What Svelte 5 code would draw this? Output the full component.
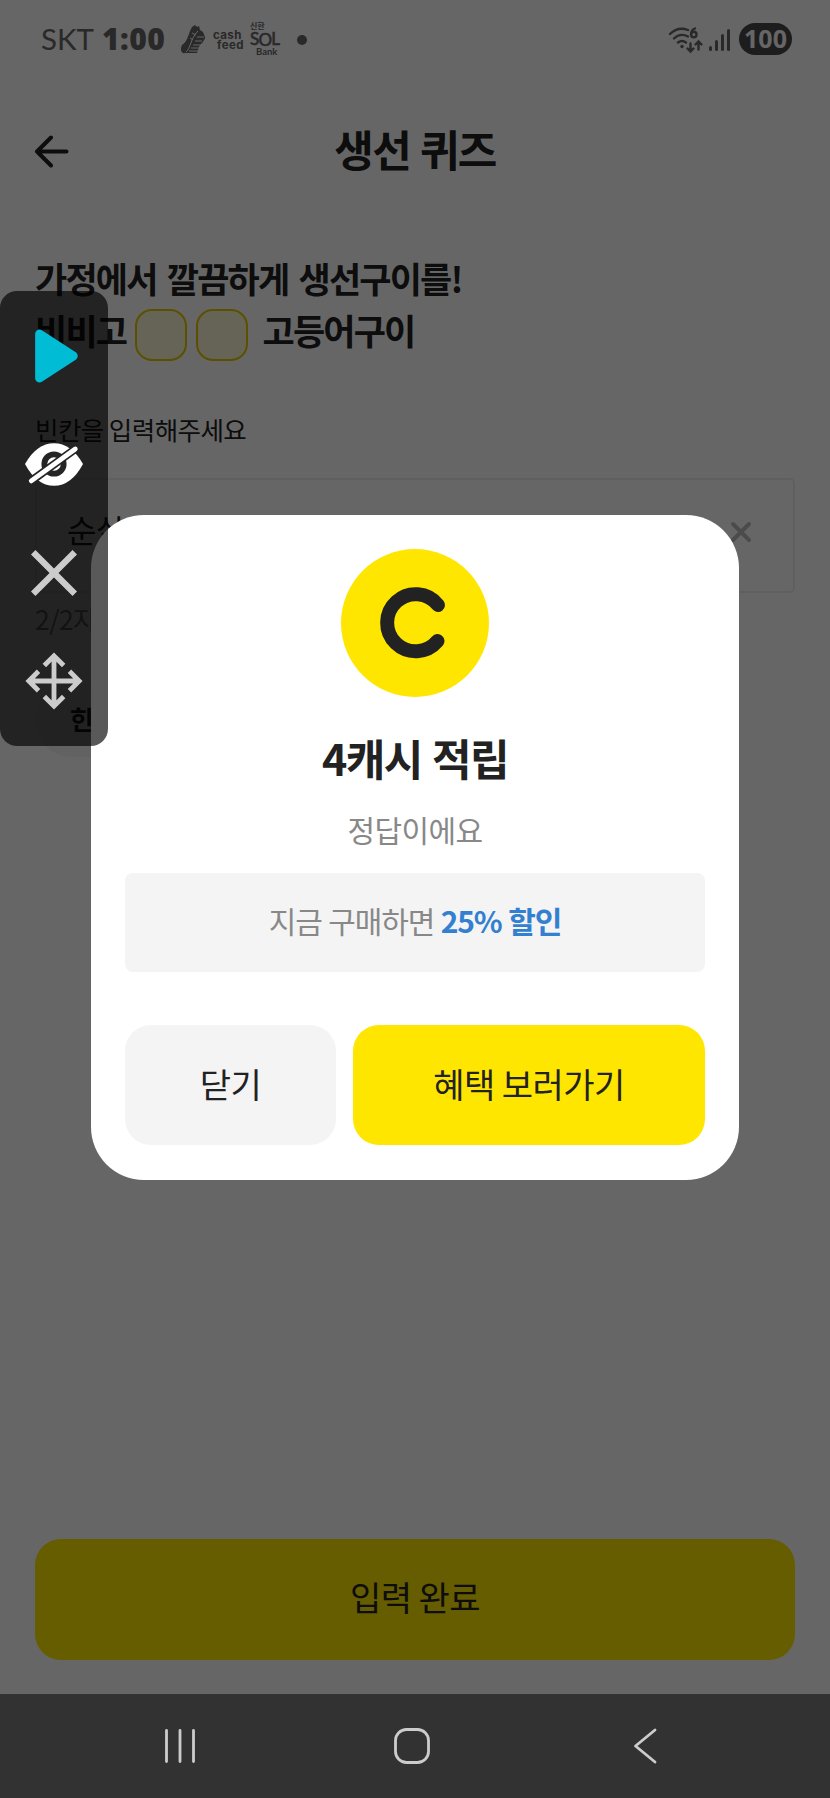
<script>
  let answer = $state('순살');
  const blanks = [1, 2];
  const signal = [5, 11, 17, 22];
</script>

<div class="phone">
  <header class="status">
    <span class="carrier">SKT</span>
    <span class="clock">1:00</span>
    <svg class="shoe" width="26" height="32" viewBox="0 0 26 32">
      <path d="M2 21C7 18 8 12 10 7L12 3l3-2 2 2 2-1 1 4 3 2 2 5c0 4-4 6-6 10l-2 6H5c-4 1-5-4-3-8z" fill="currentColor" />
      <path d="M6 28c5-4 4-13 12-21M13 21l8 0M11 24l9 0M9 27l10 0M15 17l7 0M17 13l7 0M12 9l4 2M10 14l3 2" fill="none" stroke="#fff" stroke-width="1" />
    </svg>
    <span class="cashfeed"><span>cash</span><span class="feed">feed</span></span>
    <span class="sol"><small>신한</small><b>S<em>O</em>L</b><strong>Bank</strong></span>
    <span class="more"></span>
    <span class="grow"></span>
    <svg class="wifi" width="36" height="28" viewBox="0 0 36 28" fill="none" stroke="currentColor" stroke-width="2.400" stroke-linecap="round">
      <path d="M2 8Q10 0 20 4M6 12.500q6-6 14-2M10 16.500q4-3 8 0" />
      <circle cx="14" cy="20.500" r="1.700" fill="currentColor" stroke="none" />
      <path d="M27 2.500Q23 4 23 8.500" />
      <circle cx="25.800" cy="8.500" r="2.700" />
      <path d="M22.500 17.500v8M19.500 22.500l3 3 3-3M30.500 23.500v-8M27.500 18.500l3-3 3 3" />
    </svg>
    <span class="bars">
      {#each signal as h}<i style="height: {h}px"></i>{/each}
    </span>
    <span class="battery">100</span>
  </header>

  <div class="titlebar">
    <svg width="36" height="34" viewBox="0 0 36 34" fill="none" stroke="#222" stroke-width="4" stroke-linecap="round" stroke-linejoin="round">
      <path d="M32.500 17.500H3M17 3.500L3 17.500l14 14" />
    </svg>
    <h1>생선 퀴즈</h1>
  </div>

  <main>
    <div class="question">
      <p>가정에서 깔끔하게 생선구이를!</p>
      <p class="line">
        <span class="head">비비고</span>
        {#each blanks as b (b)}<i class="blank"></i>{/each}
        <span class="tail">고등어구이</span>
      </p>
    </div>
    <p class="label">빈칸을 입력해주세요</p>
    <div class="field">
      <span>{answer}</span>
      <svg width="22" height="22" viewBox="0 0 22 22" stroke="#bbb" stroke-width="4" stroke-linecap="round"><path d="M3 3l16 16M19 3L3 19" /></svg>
    </div>
    <p class="count">{answer.length}/2자</p>
    <button class="hint">힌트</button>
    <button class="submit">입력 완료</button>
  </main>

  <nav>
    <svg width="34" height="38" viewBox="0 0 34 38"><path d="M3.500 3.500v31M17 3.500v31M30.500 3.500v31" /></svg>
    <svg class="home" width="38" height="38" viewBox="0 0 38 38"><rect x="2.500" y="2.500" width="33" height="33" rx="11" /></svg>
    <svg width="26" height="38" viewBox="0 0 26 38"><path d="M23 3L3.500 19 23 35" /></svg>
  </nav>

  <div class="scrim">
    <section class="modal">
      <svg class="coin" width="148" height="148" viewBox="0 0 148 148">
        <circle cx="74" cy="74" r="74" fill="#ffe600" />
        <path d="M97 56A28.500 28.500 0 1 0 96.500 92" fill="none" stroke="#222" stroke-width="14" stroke-linecap="round" />
      </svg>
      <h2>4캐시 적립</h2>
      <p class="result">정답이에요</p>
      <p class="offer">지금 구매하면&nbsp;<b>25% 할인</b></p>
      <div class="actions">
        <button class="close">닫기</button>
        <button class="go">혜택 보러가기</button>
      </div>
    </section>
  </div>

  <!-- floating auto-clicker controls -->
  <aside>
    <svg viewBox="0 0 60 60"><path d="M15 7v46L50 30z" fill="#00bcd4" stroke="#00bcd4" stroke-width="9" stroke-linejoin="round" /></svg>
    <svg viewBox="0 0 60 60">
      <path d="M0 30Q12 8.500 30 8.500Q48 8.500 60 30Q48 52.500 30 52.500Q12 52.500 0 30z" fill="#fff" />
      <circle cx="30" cy="30" r="10" fill="none" stroke="#252525" stroke-width="6" />
      <path d="M6.500 47.500L52 14.500" stroke="#252525" stroke-width="8.500" />
      <path d="M6.500 47.500L52 14.500" stroke="#fff" stroke-width="5" stroke-linecap="round" />
    </svg>
    <svg viewBox="0 0 60 60"><path d="M8.500 8.500l43 43M51.500 8.500l-43 43" stroke="#ccc" stroke-width="6.500" /></svg>
    <svg viewBox="0 0 60 60" fill="none" stroke="#ccc" stroke-width="5">
      <path d="M30 5v50M5 30h50M20 14L30 4l10 10M20 46l10 10 10-10M14 20L4 30l10 10M46 20l10 10-10 10" />
    </svg>
  </aside>
</div>

<style>
  :global(body) { margin: 0; }
  * { box-sizing: border-box; }
  .phone { position: relative; width: 830px; height: 1798px; display: flex; flex-direction: column; overflow: hidden; background: #fff; color: #222; font-family: "Noto Sans CJK KR", sans-serif; letter-spacing: -0.035em; }
  h1, h2, p { margin: 0; }
  button { border: 0; padding: 0; color: inherit; font: inherit; letter-spacing: inherit; }
  svg { display: block; flex: none; }

  .status { height: 79px; padding: 0 38px 0 41px; display: flex; align-items: center; color: #666; font-family: "Open Sans", sans-serif; letter-spacing: 0; }
  .carrier { width: 61px; margin-top: -2px; font: 29.5px Lato, sans-serif; }
  .clock { width: 78px; margin-top: -2px; font-weight: 800; font-size: 30px; letter-spacing: 0.5px; }
  .cashfeed { display: flex; flex-direction: column; margin-left: 7px; width: 37px; font: 700 11.5px/10px Inter, sans-serif; letter-spacing: 0.4px; }
  .feed { margin-left: 4px; }
  .sol { display: flex; flex-direction: column; width: 32px; line-height: 1; }
  .sol small { font: 700 8px/8px "Noto Sans CJK KR", sans-serif; }
  .sol b { font: 17px/17px Lato, sans-serif; letter-spacing: -0.8px; -webkit-text-stroke: 0.6px; }
  .sol em { position: relative; top: 1px; font-style: normal; }
  .sol strong { font: 700 9.5px/10px Lato, sans-serif; margin-left: 6px; }
  .more { width: 10px; height: 10px; margin-left: 15px; border-radius: 50%; background: currentColor; }
  .grow { flex: 1; }
  .bars { display: flex; align-items: flex-end; gap: 3px; margin: 0 9px 0 5px; }
  .bars i { width: 3px; border-radius: 2px; background: currentColor; }
  .battery { width: 53px; height: 32px; margin-top: -1px; border-radius: 16px; background: #4a4a4a; color: #fff; font-size: 25px; font-weight: 700; line-height: 30px; text-align: center; }

  .titlebar { height: 144px; padding: 0 34px; display: flex; align-items: center; }
  .titlebar h1 { flex: 1; margin: -7px 36px 0 0; text-align: center; font-size: 43px; line-height: 64px; letter-spacing: -0.04em; word-spacing: 2px; }

  main { flex: 1; padding: 29px 35px 34px; display: flex; flex-direction: column; align-items: flex-start; }
  .question { font-size: 35px; font-weight: 700; line-height: 52px; letter-spacing: -1.8px; word-spacing: 4px; }
  .line { display: flex; height: 52px; }
  .blank { width: 52px; height: 52px; margin: 5px 9px 0 0; border: 2px solid #e6c800; border-radius: 17px; background: #fffbd8; }
  .head { width: 99.5px; }
  .tail { margin-left: 6px; }
  .label { margin-top: 53px; font-size: 25.5px; line-height: 40px; }
  .field { width: 100%; height: 115px; margin-top: 29px; padding: 0 41px 8px 30px; display: flex; align-items: center; justify-content: space-between; border: 2px solid #eee; border-radius: 5px; font-size: 32px; }
  .field span { margin-top: -6px; }
  .count { margin-top: 6px; font-size: 26.5px; line-height: 40px; color: #888; }
  .hint { width: 116px; height: 74px; margin-top: 44px; padding-bottom: 4px; border-radius: 37px; background: #f4f4f4; font-size: 26px; font-weight: 700; }
  .submit { width: 100%; height: 121px; margin-top: auto; padding-bottom: 6px; border-radius: 26px; background: #ffe600; font-size: 34px; }

  /* system navigation sits above the page, not under the dialog */
  nav { position: relative; z-index: 1; height: 104px; padding: 0 172px 0 163px; display: flex; align-items: center; justify-content: space-between; background: #323232; }
  nav svg { fill: none; stroke: #ccc; stroke-width: 2.8; stroke-linecap: round; stroke-linejoin: round; }
  nav .home { margin-right: 6px; }

  .scrim { position: absolute; inset: 0; display: flex; justify-content: center; align-items: flex-start; padding-top: 515px; background: rgba(0, 0, 0, .6); }
  .modal { width: 648px; height: 665px; padding: 34px 34px 35px; display: flex; flex-direction: column; align-items: center; border-radius: 53px; background: #fff; }
  h2 { margin-top: 28px; font-size: 43px; line-height: 64px; letter-spacing: -0.037em; word-spacing: 2px; }
  .result { margin-top: 18px; font-size: 30px; line-height: 44px; color: #888; }
  .offer { width: 100%; height: 99px; margin-top: 22px; padding-bottom: 6px; display: flex; align-items: center; justify-content: center; border-radius: 8px; background: #f4f4f4; color: #888; font-size: 30px; letter-spacing: -0.038em; word-spacing: 1px; }
  .offer b { color: #337fd0; }
  .actions { width: 100%; margin-top: auto; display: flex; gap: 17px; font-size: 34px; }
  .actions button { height: 120px; padding-bottom: 4px; border-radius: 26px; }
  .actions .close { width: 211px; background: #f4f4f4; }
  .actions .go { flex: 1; background: #ffe600; }

  aside { position: absolute; left: 0; top: 291px; width: 108px; height: 455px; padding: 36px 0; display: flex; flex-direction: column; align-items: center; justify-content: space-between; border-radius: 17px; background: rgba(0, 0, 0, .65); }
  aside svg { width: 58px; height: 58px; }
</style>
